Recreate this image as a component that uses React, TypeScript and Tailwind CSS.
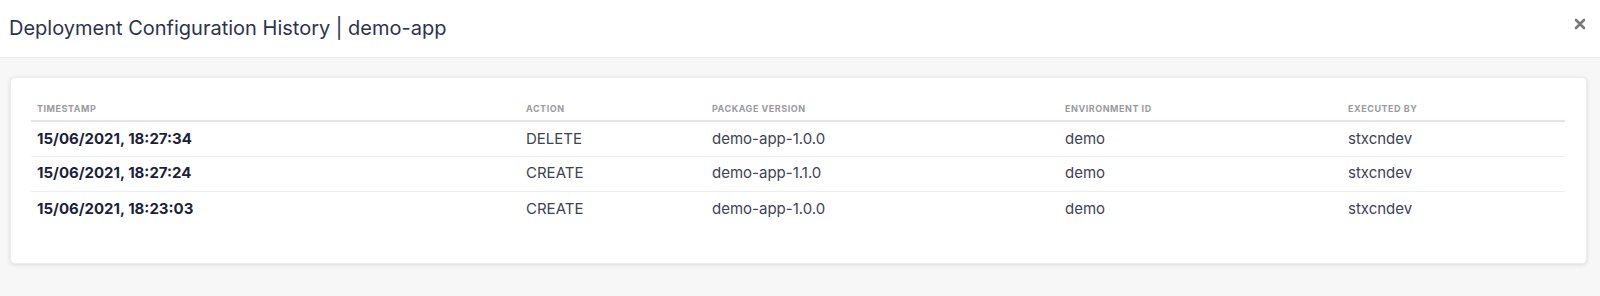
import React from "react";

const rows = [
  { ts: "15/06/2021, 18:27:34", action: "DELETE", pkg: "demo-app-1.0.0", env: "demo", by: "stxcndev" },
  { ts: "15/06/2021, 18:27:24", action: "CREATE", pkg: "demo-app-1.1.0", env: "demo", by: "stxcndev" },
  { ts: "15/06/2021, 18:23:03", action: "CREATE", pkg: "demo-app-1.0.0", env: "demo", by: "stxcndev" },
];

export default function App() {
  return (
    <div className="w-[1600px] h-[296px] bg-[#f7f7f7] flex flex-col" style={{ fontFamily: "Inter, 'Noto Sans', sans-serif" }}>
      <div className="h-[58px] bg-white border-b border-[#ebebeb] flex items-center justify-between pl-[9px] pr-[14px]">
        <h1 className="text-[20px] text-[#2c3350] font-normal leading-none pb-[2px]">Deployment Configuration History | demo-app</h1>
        <svg width="12" height="12" viewBox="0 0 12 12" className="mb-[10px]">
          <path d="M2 2 L10 10 M10 2 L2 10" stroke="#7a7a7a" strokeWidth="2.6" strokeLinecap="round" />
        </svg>
      </div>
      <div className="flex-1 pt-[19px] pl-[10px] pr-[13px]">
        <div className="bg-white rounded-[5px] shadow-[0_1px_4px_rgba(0,0,0,0.12)] border border-[#ececec] h-[187px] pt-[21px] pl-[20px] pr-[21px]">
          <table className="w-full border-collapse table-fixed">
            <colgroup>
              <col className="w-[489px]" />
              <col className="w-[186px]" />
              <col className="w-[353px]" />
              <col className="w-[283px]" />
              <col />
            </colgroup>
            <thead>
              <tr className="border-b-2 border-[#e4e6ee]">
                {["TIMESTAMP", "ACTION", "PACKAGE VERSION", "ENVIRONMENT ID", "EXECUTED BY"].map((h) => (
                  <th key={h} className="text-left pl-[6px] h-[22px] pb-[2px] text-[9px] font-bold tracking-[0.06em] text-[#9a9a9f]">
                    {h}
                  </th>
                ))}
              </tr>
            </thead>
            <tbody>
              {rows.map((r, i) => (
                <tr key={i} className={i < rows.length - 1 ? "border-b border-[#eceef2]" : ""}>
                  <td className="pl-[6px] h-[35px] text-[15px] font-bold text-[#1b1f3b]">{r.ts}</td>
                  <td className="pl-[6px] text-[15px] text-[#3e4257]">{r.action}</td>
                  <td className="pl-[6px] text-[15px] text-[#3e4257]">{r.pkg}</td>
                  <td className="pl-[6px] text-[15px] text-[#3e4257]">{r.env}</td>
                  <td className="pl-[6px] text-[15px] text-[#3e4257]">{r.by}</td>
                </tr>
              ))}
            </tbody>
          </table>
        </div>
      </div>
    </div>
  );
}
